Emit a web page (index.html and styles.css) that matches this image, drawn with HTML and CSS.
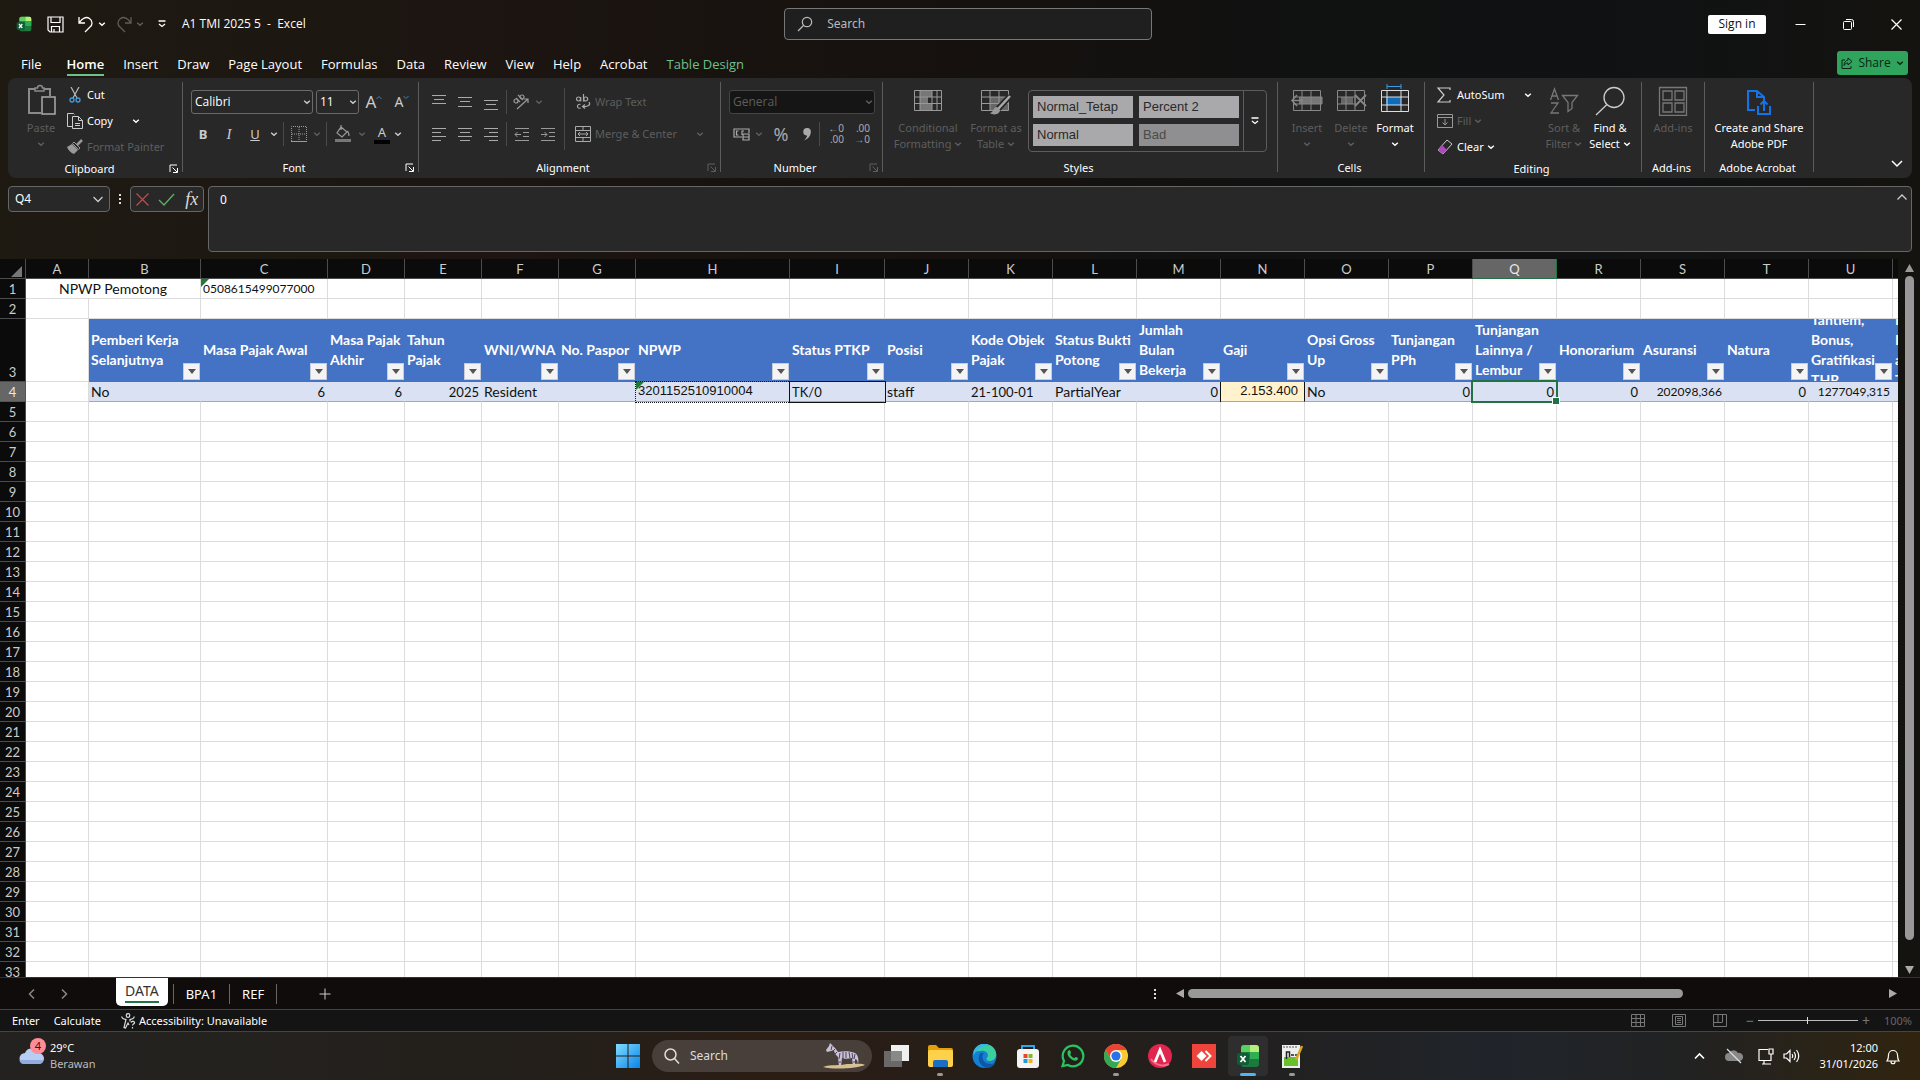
FILE: index.html
```html
<!DOCTYPE html>
<html lang="id">
<head>
<meta charset="utf-8">
<title>A1 TMI 2025 5 - Excel</title>
<link rel="stylesheet" href="styles.css">
</head>
<body>
<svg class="defs" aria-hidden="true">
  <symbol id="chev" viewBox="0 0 8 8"><path d="M1.2 2.8 4 5.2 6.8 2.8" fill="none" stroke="currentColor" stroke-width="1.5"/></symbol>
  <symbol id="launch" viewBox="0 0 10 10"><path d="M1 8V1h7M3.5 3.5 8 8M8.500 4v4.500H4" fill="none" stroke="currentColor"/></symbol>
  <symbol id="al" viewBox="0 0 16 16"><path d="M1 2.500h14M1 6.500h9M1 10.500h14M1 14.500h9" stroke="currentColor"/></symbol>
  <symbol id="ac" viewBox="0 0 16 16"><path d="M1 2.500h14M3 6.500h10M1 10.500h14M3 14.500h10" stroke="currentColor"/></symbol>
  <symbol id="ar" viewBox="0 0 16 16"><path d="M1 2.500h14M6 6.500h9M1 10.500h14M6 14.500h9" stroke="currentColor"/></symbol>
  <symbol id="vt" viewBox="0 0 16 16"><path d="M1 1.500h14M3 5.500h10M1 9.500h14" stroke="currentColor"/></symbol>
  <symbol id="vm" viewBox="0 0 16 16"><path d="M1 3.500h14M3 7.500h10M1 12.500h14" stroke="currentColor"/></symbol>
  <symbol id="vb" viewBox="0 0 16 16"><path d="M1 6.500h14M3 10.500h10M1 15.500h14" stroke="currentColor"/></symbol>
  <symbol id="xl" viewBox="0 0 24 24"><rect x="5" y="1" width="18" height="22" rx="3" fill="#1b7a3c"/><path d="M5 8V4a3 3 0 0 1 3-3h6v7z" fill="#5ad05f"/><path d="M14 1h6a3 3 0 0 1 3 3v4h-9z" fill="#b4f07a"/><path d="M14 8h9v7h-9z" fill="#2fae54"/><rect x="1" y="9" width="12" height="12" rx="2.500" fill="#0f5c36"/><path d="m4.500 12 5 6m0-6-5 6" stroke="#fff" stroke-width="1.800"/></symbol>
</svg>

<header class="titlebar">
  <svg class="i16" viewBox="0 0 24 24"><use href="#xl"/></svg>
  <button class="ib save" aria-label="Save"><svg width="17" height="17" viewBox="0 0 17 17" fill="none" stroke="currentColor" stroke-width="1.200"><path d="M1 1h15v15H3l-2-2zM4 1v5.500h9V1M4.500 16v-5.500h8V16M7 13v3"/></svg></button>
  <button class="ib" aria-label="Undo"><svg width="16" height="17" viewBox="0 0 16 17" fill="none" stroke="currentColor" stroke-width="1.300"><path d="M1 1v6h6M1.500 6.500C4 2.500 8 0 11.500 2.500s3 6.500.500 8.500l-5 5"/></svg></button>
  <svg class="cv" viewBox="0 0 8 8"><use href="#chev"/></svg>
  <button class="ib dim redo" aria-label="Redo"><svg width="16" height="17" viewBox="0 0 16 17" fill="none" stroke="currentColor" stroke-width="1.300"><path d="M15 1v6H9M14.500 6.500C12 2.500 8 0 4.500 2.500s-3 6.500-.5 8.500l5 5"/></svg></button>
  <svg class="cv dim" viewBox="0 0 8 8"><use href="#chev"/></svg>
  <button class="ib qat" aria-label="Customize"><svg width="8" height="8" viewBox="0 0 8 8" fill="none" stroke="currentColor" stroke-width="1.300"><path d="M.5 1h7M1 4l3 2.500L7 4"/></svg></button>
  <span class="doc">A1 TMI 2025 5&nbsp; -&nbsp; Excel</span>
  <label class="search"><svg width="16" height="16" viewBox="0 0 16 16" fill="none" stroke="currentColor" stroke-width="1.200"><circle cx="10" cy="6" r="4.700"/><path d="M6.500 9.500 1 15"/></svg><input type="text" placeholder="Search" aria-label="Search"></label>
  <div class="winctl">
    <button class="signin">Sign in</button>
    <button class="wb" aria-label="Minimize"><svg width="11" height="11" viewBox="0 0 11 11"><path d="M.5 5.500h10" stroke="#fff"/></svg></button>
    <button class="wb" aria-label="Restore"><svg width="11" height="11" viewBox="0 0 11 11" fill="none" stroke="#fff"><rect x=".5" y="2.500" width="8" height="8" rx="1"/><path d="M3 .5h5.500a2 2 0 0 1 2 2V8"/></svg></button>
    <button class="wb" aria-label="Close"><svg width="11" height="11" viewBox="0 0 11 11"><path d="m.5.500 10 10m0-10-10 10" stroke="#fff" stroke-width="1.200"/></svg></button>
  </div>
</header>

<nav class="tabs">
  <a href="#">File</a><a href="#" class="on">Home</a><a href="#">Insert</a><a href="#">Draw</a><a href="#">Page Layout</a><a href="#">Formulas</a><a href="#">Data</a><a href="#">Review</a><a href="#">View</a><a href="#">Help</a><a href="#">Acrobat</a><a href="#" class="ctx">Table Design</a>
  <button class="share"><svg width="12" height="12" viewBox="0 0 12 12" fill="none" stroke="currentColor"><path d="M4 3H1v8.500h9V9M7 1l4 3.500L7 8V6C5 6 4 7 3 8.500 3.200 5.500 4.500 3.500 7 3z"/></svg>Share<svg class="cv" viewBox="0 0 8 8"><use href="#chev"/></svg></button>
</nav>

<section class="ribbon">
  <div class="group g-clip">
    <div class="body">
      <button class="big w42 dim"><svg width="30" height="32" viewBox="0 0 30 32" fill="none" stroke="#8a8a8a" stroke-width="1.500"><path d="M15 29H3V5h6M18 5h6v7" stroke-width="2"/><path d="M9 7V4h2.500a2.500 2.500 0 0 1 5 0H18v3z"/><rect x="16" y="13" width="13" height="17" stroke="#aaa"/></svg><span>Paste</span><svg class="cv" viewBox="0 0 8 8"><use href="#chev"/></svg></button>
      <div class="rows">
        <button class="row"><svg class="ic" viewBox="0 0 18 16" fill="none"><path d="m5 0 6 11M13 0 7 11" stroke="#bbb" stroke-width="1.200"/><circle cx="6" cy="13" r="2" stroke="#3f9be0" stroke-width="1.300"/><circle cx="12" cy="13" r="2" stroke="#3f9be0" stroke-width="1.300"/></svg>Cut</button>
        <button class="row"><svg class="ic" viewBox="0 0 18 16" fill="none" stroke="#ccc"><path d="M6 13.500H1.500v-13h6l1 1M6.500 3.500h6l4 4v8h-10zM12.500 3.500v4h4M9 10.500h5M9 12.500h5"/></svg>Copy<svg class="cv far" viewBox="0 0 8 8"><use href="#chev"/></svg></button>
        <button class="row dim"><svg class="ic" viewBox="0 0 18 16"><path d="m16 1-5 5" stroke="#999" stroke-width="2.500"/><path d="m8 3 6 6-1.500 1.500-6-6z" fill="none" stroke="#999"/><path d="M6 5 1 8c1 3 4 6 7 7l4-4z" fill="#999"/></svg>Format Painter</button>
      </div>
    </div>
    <footer><span>Clipboard</span><svg class="la" viewBox="0 0 10 10"><use href="#launch"/></svg></footer>
  </div>
  <div class="sep"></div>

  <div class="group g-font">
    <div class="body two">
      <div class="line">
        <label class="combo w122"><select aria-label="Font"><option>Calibri</option></select><svg class="cv" viewBox="0 0 8 8"><use href="#chev"/></svg></label>
        <label class="combo w43"><select aria-label="Font size"><option>11</option></select><svg class="cv" viewBox="0 0 8 8"><use href="#chev"/></svg></label>
        <button class="t24 fs16" aria-label="Grow font">A<svg width="6" height="14" viewBox="0 0 6 14"><path d="m.5 4 2.500-2.500L5.500 4" fill="none" stroke="#3f7fb5"/></svg></button>
        <button class="t26 fs14" aria-label="Shrink font">A<svg width="6" height="14" viewBox="0 0 6 14"><path d="M.5 1 3 3.500 5.500 1" fill="none" stroke="#3f7fb5"/></svg></button>
      </div>
      <div class="line flush">
        <button class="t26"><b>B</b></button><button class="t26"><i class="ser">I</i></button><button class="t26"><u>U</u></button><svg class="cv m2" viewBox="0 0 8 8"><use href="#chev"/></svg>
        <span class="vs"></span>
        <button class="t24" aria-label="Borders"><svg width="16" height="16" viewBox="0 0 16 16" fill="none" stroke="#9a9a9a"><path d="M.5 15V.5h15V15M8 1v14M1 8h14" stroke-dasharray="1 1"/><path d="M0 15.500h16"/></svg></button><svg class="cv m2 dim" viewBox="0 0 8 8"><use href="#chev"/></svg>
        <span class="vs"></span>
        <button class="t26" aria-label="Fill colour"><svg width="16" height="18" viewBox="0 0 16 18"><path d="m6 2 6 5-5 5-5-4zM6 5V0M12 6c2 1 2 3 2 5" fill="none" stroke="#999" stroke-width="1.200"/><path d="M0 14h16v3H0z" fill="#777"/></svg></button><svg class="cv m2 dim" viewBox="0 0 8 8"><use href="#chev"/></svg>
        <button class="t24 fcol" aria-label="Font colour">A</button><svg class="cv m2" viewBox="0 0 8 8"><use href="#chev"/></svg>
      </div>
    </div>
    <footer><span>Font</span><svg class="la" viewBox="0 0 10 10"><use href="#launch"/></svg></footer>
  </div>
  <div class="sep"></div>

  <div class="group g-align">
    <div class="body">
      <div class="two w138">
        <div class="line flush">
          <button class="t26" aria-label="Top"><svg class="i16" viewBox="0 0 16 16"><use href="#vt"/></svg></button><button class="t26" aria-label="Middle"><svg class="i16" viewBox="0 0 16 16"><use href="#vm"/></svg></button><button class="t26" aria-label="Bottom"><svg class="i16" viewBox="0 0 16 16"><use href="#vb"/></svg></button>
          <span class="vs near"></span>
          <button class="t24" aria-label="Orientation"><svg class="i16" viewBox="0 0 16 16" fill="none" stroke="#999" stroke-width="1.200"><circle cx="3" cy="7" r="2"/><path d="m3 4 4 4M5 1l5 5"/><circle cx="9" cy="3" r="2"/><path d="M4 15 15 5M11 5h4v4"/></svg></button><svg class="cv m2 dim" viewBox="0 0 8 8"><use href="#chev"/></svg>
        </div>
        <div class="line flush">
          <button class="t26" aria-label="Left"><svg class="i16" viewBox="0 0 16 16"><use href="#al"/></svg></button><button class="t26" aria-label="Center"><svg class="i16" viewBox="0 0 16 16"><use href="#ac"/></svg></button><button class="t26" aria-label="Right"><svg class="i16" viewBox="0 0 16 16"><use href="#ar"/></svg></button>
          <span class="vs near"></span>
          <button class="t26" aria-label="Decrease indent"><svg class="i16" viewBox="0 0 16 16" fill="none" stroke="#999"><path d="M1 2.500h14M9 6.500h6M9 10.500h6M1 14.500h14M7 8.500H1M3.500 6 1 8.500 3.500 11"/></svg></button><button class="t26" aria-label="Increase indent"><svg class="i16" viewBox="0 0 16 16" fill="none" stroke="#999"><path d="M1 2.500h14M9 6.500h6M9 10.500h6M1 14.500h14M1 8.500h6M4.500 6 7 8.500 4.500 11"/></svg></button>
        </div>
      </div>
      <div class="vs tall"></div>
      <div class="two wrapcol">
        <button class="row r24 dim"><svg class="ic" viewBox="0 0 18 16" fill="none" stroke="#aaa" stroke-width="1.200"><circle cx="4.500" cy="5" r="2"/><path d="M6.700 3v4.500M9.500 0v7.500"/><circle cx="11.700" cy="5" r="2"/><path d="M6.500 10.500c-4-1.500-4 5 0 3.500M15 8c2 3-1 5-6 4.500m2-2-2.500 2 2.500 2"/></svg>Wrap Text</button>
        <button class="row r24 dim"><svg class="ic" viewBox="0 0 18 16" fill="none" stroke="#aaa"><path d="M1.500.5h15v15h-15zM1.500 4.500h15M1.500 11.500h15M9 .5v4M9 11.500v4M4 8h10M6 6 4 8l2 2M12 6l2 2-2 2"/></svg>Merge &amp; Center<svg class="cv far" viewBox="0 0 8 8"><use href="#chev"/></svg></button>
      </div>
    </div>
    <footer><span>Alignment</span><svg class="la dim" viewBox="0 0 10 10"><use href="#launch"/></svg></footer>
  </div>
  <div class="sep"></div>

  <div class="group g-num">
    <div class="body two">
      <div class="line"><label class="combo off w146"><select disabled aria-label="Number format"><option>General</option></select><svg class="cv" viewBox="0 0 8 8"><use href="#chev"/></svg></label></div>
      <div class="line tight">
        <button class="t24" aria-label="Accounting"><svg width="17" height="16" viewBox="0 0 17 16" fill="none" stroke="#aaa" stroke-width="1.200"><path d="M9 11H1V3h15v4M5.500 5h-2v4h2M9 9V5h2"/><path d="M10 8h6v6h-6zM10 11h6" /></svg></button><svg class="cv m2 dim" viewBox="0 0 8 8"><use href="#chev"/></svg>
        <button class="t32 pct">%</button>
        <button class="t20" aria-label="Comma"><svg width="8" height="13" viewBox="0 0 8 13"><path d="M4 0a3.500 3.500 0 0 1 3.800 4C7.800 8 5 11 1 12.500c2-2 3-3.500 3-5A3.500 3.500 0 0 1 4 0z" fill="#aaa"/></svg></button>
        <span class="vs near"></span>
        <button class="t26 dec">←0<br>.00</button><button class="t26 dec">.00<br>→0</button>
      </div>
    </div>
    <footer><span>Number</span><svg class="la dim" viewBox="0 0 10 10"><use href="#launch"/></svg></footer>
  </div>
  <div class="sep"></div>

  <div class="group g-sty">
    <div class="body">
      <button class="big w84 dim"><svg width="30" height="32" viewBox="0 0 30 32"><path d="M7 6h12v20H7z" fill="#777"/><path d="M15 13h8v6h-8z" fill="#282828"/><path d="M1.500 6.500h27v20h-27zM1.500 13h27M1.500 19.500h27M7 6v20M19 6v20M24 6v20" fill="none" stroke="#999"/></svg><span>Conditional<br>Formatting <svg class="cv" viewBox="0 0 8 8"><use href="#chev"/></svg></span></button>
      <button class="big w52 dim"><svg width="32" height="32" viewBox="0 0 32 32"><path d="M10 13h18v13H10z" fill="#666"/><path d="M1.500 6.500h27v20h-27zM1.500 13h27M1.500 19.500h27M10 6v20M19 6v20" fill="none" stroke="#999"/><path d="M30 12 18 25" stroke="#282828" stroke-width="6"/><path d="M30 12 18 25" stroke="#aaa" stroke-width="2.500"/><path d="M17 23c-4 0-3 5-7 6 4 3 10 1 10-3z" fill="#999"/></svg><span>Format as<br>Table <svg class="cv" viewBox="0 0 8 8"><use href="#chev"/></svg></span></button>
      <div class="gallery"><div class="swatches"><button>Normal_Tetap</button><button>Percent 2</button><button>Normal</button><button class="bad">Bad</button></div><button class="more" aria-label="More"><svg width="8" height="8" viewBox="0 0 8 8" fill="none" stroke="#fff" stroke-width="1.300"><path d="M.5 1h7M1 4l3 2.500L7 4"/></svg></button></div>
    </div>
    <footer><span>Styles</span></footer>
  </div>
  <div class="sep"></div>

  <div class="group g-cells">
    <div class="body">
      <button class="big w44 dim"><svg width="32" height="32" viewBox="0 0 32 32"><path d="M8 13h23v7H8z" fill="#777"/><path d="M2.500 6.500h27v20h-27zM11 6v20M20 6v20M2 13h29v7H2" fill="none" stroke="#888"/><path d="M12 16.500H1M6 11l-5 5.500L6 22" fill="none" stroke="#888" stroke-width="1.500"/></svg><span>Insert</span><svg class="cv" viewBox="0 0 8 8"><use href="#chev"/></svg></button>
      <button class="big w44 dim"><svg width="32" height="32" viewBox="0 0 32 32"><path d="M6 13h12v7H6z" fill="#666"/><path d="M2.500 6.500h27v20h-27zM11 6v20M20 6v20M2 13h18v7H2" fill="none" stroke="#888"/><path d="m20 11 11 11m0-11L20 22" fill="none" stroke="#888" stroke-width="1.800"/></svg><span>Delete</span><svg class="cv" viewBox="0 0 8 8"><use href="#chev"/></svg></button>
      <button class="big w44"><svg width="32" height="32" viewBox="0 0 32 32"><path d="M7 13h15v8H7z" fill="#0f6cbd"/><path d="M2.500 6.500h27v21h-27zM2 13h27M2 21h27M8 7v20M22 7v20" fill="none" stroke="#ddd"/><path d="M8 2.500h14M8 0v5M22 0v5" stroke="#3f9be0"/></svg><span>Format</span><svg class="cv" viewBox="0 0 8 8"><use href="#chev"/></svg></button>
    </div>
    <footer><span>Cells</span></footer>
  </div>
  <div class="sep"></div>

  <div class="group g-edit">
    <div class="body">
      <div class="rows w106">
        <button class="row"><svg class="ic" viewBox="0 0 18 16"><path d="M14 3V1H2l6 7-6 7h12v-2" fill="none" stroke="#ccc" stroke-width="1.200"/></svg>AutoSum<svg class="cv far2" viewBox="0 0 8 8"><use href="#chev"/></svg></button>
        <button class="row dim"><svg class="ic" viewBox="0 0 18 16" fill="none" stroke="#999"><path d="M1.500 1.500h15v13h-15zM1.500 4.500h15M9 6v6M6.500 9.500 9 12l2.500-2.500"/></svg>Fill <svg class="cv" viewBox="0 0 8 8"><use href="#chev"/></svg></button>
        <button class="row"><svg class="ic" viewBox="0 0 18 16"><path d="m11 1 5 4-9 10-5-4z" fill="none" stroke="#ccc"/><path d="m6 6 5 5-4 4-5-4z" fill="#b146c2"/></svg>Clear <svg class="cv" viewBox="0 0 8 8"><use href="#chev"/></svg></button>
      </div>
      <button class="big w46 dim"><svg width="30" height="32" viewBox="0 0 30 32" fill="none" stroke="#777" stroke-width="1.300"><path d="m1.500 16 4-11 4 11M3 12h5M2 19h7L2 29h8M13.500 11.500h15l-5.500 7v6l-4 3v-9z"/></svg><span>Sort &amp;<br>Filter <svg class="cv" viewBox="0 0 8 8"><use href="#chev"/></svg></span></button>
      <button class="big w46"><svg width="30" height="32" viewBox="0 0 30 32" fill="none" stroke="#ccc" stroke-width="1.300"><circle cx="19" cy="13.500" r="10"/><path d="M12 20.500 1 31"/></svg><span>Find &amp;<br>Select <svg class="cv" viewBox="0 0 8 8"><use href="#chev"/></svg></span></button>
    </div>
    <footer><span>Editing</span></footer>
  </div>
  <div class="sep"></div>

  <div class="group g-add">
    <div class="body mid">
      <button class="big dim"><svg width="30" height="32" viewBox="0 0 30 32" fill="none" stroke="#777" stroke-width="1.300"><path d="M1.500 3.500h27v28h-27zM5 7h9v9H5zM17 7h9v9h-9zM5 19h9v9H5zM17 19h9v9h-9z"/></svg><span>Add-ins</span></button>
    </div>
    <footer><span>Add-ins</span></footer>
  </div>
  <div class="sep"></div>

  <div class="group g-acro">
    <div class="body mid">
      <button class="big"><svg width="26" height="32" viewBox="0 0 26 32" fill="none" stroke="#1473e6" stroke-width="2"><path d="M9 26H2V7h9l7 6v4M11 7v6h7M12 22v8h12v-8M18 27v-9M14.500 20.500 18 17l3.500 3.500"/></svg><span>Create and Share<br>Adobe PDF</span></button>
    </div>
    <footer><span>Adobe Acrobat</span></footer>
  </div>
  <div class="sep"></div>
  <button class="collapse" aria-label="Collapse ribbon"><svg width="12" height="8" viewBox="0 0 12 8"><path d="m1 1 5 5 5-5" fill="none" stroke="#fff" stroke-width="1.500"/></svg></button>
</section>

<section class="formula">
  <label class="namebox"><input type="text" value="Q4" aria-label="Name box"><svg width="10" height="7" viewBox="0 0 10 7"><path d="m.5 1 4.500 4.500L9.500 1" fill="none" stroke="#ccc" stroke-width="1.300"/></svg></label>
  <span class="dots"></span>
  <div class="fx"><button aria-label="Cancel"><svg width="13" height="13" viewBox="0 0 13 13"><path d="m.5.500 12 12m0-12-12 12" stroke="#c24b4b" stroke-width="1.200"/></svg></button><button aria-label="Enter"><svg width="17" height="13" viewBox="0 0 17 13"><path d="m1 7 5 5L16 1" fill="none" stroke="#5fb05f" stroke-width="1.300"/></svg></button><button class="ser">fx</button></div>
  <div class="fbox"><textarea aria-label="Formula">0</textarea><svg width="10" height="7" viewBox="0 0 10 7"><path d="m.5 5.500 4.500-4.500 4.500 4.500" fill="none" stroke="#ccc" stroke-width="1.300"/></svg></div>
</section>

<main class="sheet">
  <div class="viewport">
    <table class="grid">
      <colgroup><col class="c26"><col class="c62"><col class="c112"><col class="c127"><col class="c77"><col class="c77"><col class="c77"><col class="c77"><col class="c154"><col class="c95"><col class="c84" span="13"></colgroup>
      <thead><tr><th class="corner"><svg width="11" height="11" viewBox="0 0 11 11"><path d="M11 0v11H0z" fill="#777"/></svg></th><th>A</th><th>B</th><th>C</th><th>D</th><th>E</th><th>F</th><th>G</th><th>H</th><th>I</th><th>J</th><th>K</th><th>L</th><th>M</th><th>N</th><th>O</th><th>P</th><th class="sel">Q</th><th>R</th><th>S</th><th>T</th><th>U</th><th></th></tr></thead>
      <tbody id="rows">
        <tr><th>1</th><td colspan="2" class="mid-t">NPWP Pemotong</td><td class="err num-t">0508615499077000</td><td></td><td></td><td></td><td></td><td></td><td></td><td></td><td></td><td></td><td></td><td></td><td></td><td></td><td></td><td></td><td></td><td></td><td></td><td></td></tr>
        <tr><th>2</th><td></td><td></td><td></td><td></td><td></td><td></td><td></td><td></td><td></td><td></td><td></td><td></td><td></td><td></td><td></td><td></td><td></td><td></td><td></td><td></td><td></td><td></td></tr>
        <tr class="head"><th>3</th><td></td><td><div>Pemberi Kerja<br>Selanjutnya</div></td><td><div>Masa Pajak Awal</div></td><td><div>Masa Pajak<br>Akhir</div></td><td><div>Tahun<br>Pajak</div></td><td><div>WNI/WNA</div></td><td><div>No. Paspor</div></td><td><div>NPWP</div></td><td><div>Status PTKP</div></td><td><div>Posisi</div></td><td><div>Kode Objek<br>Pajak</div></td><td><div>Status Bukti<br>Potong</div></td><td><div>Jumlah<br>Bulan<br>Bekerja</div></td><td><div>Gaji</div></td><td><div>Opsi Gross<br>Up</div></td><td><div>Tunjangan<br>PPh</div></td><td><div>Tunjangan<br>Lainnya /<br>Lembur</div></td><td><div>Honorarium</div></td><td><div>Asuransi</div></td><td><div>Natura</div></td><td><div>Tantiem,<br>Bonus,<br>Gratifikasi,<br>THR</div></td><td><div>Iuran<br>Pensiun<br>atau<br>THT</div></td></tr>
        <tr class="data"><th class="sel">4</th><td></td><td>No</td><td class="r n">6</td><td class="r n">6</td><td class="r n">2025</td><td>Resident</td><td></td><td class="err ants arial">3201152510910004</td><td class="boxed n">TK/0</td><td>staff</td><td class="n">21-100-01</td><td>PartialYear</td><td class="r n">0</td><td class="r arial gaji">2.153.400</td><td>No</td><td class="r n">0</td><td class="r n active">0</td><td class="r n">0</td><td class="r num-t">202098,366</td><td class="r n">0</td><td class="r num-t">1277049,315</td><td></td></tr>
      </tbody>
    </table>
  </div>
  <div class="vscroll"><svg width="9" height="8" viewBox="0 0 9 8"><path d="M4.500 0 9 8H0z" fill="#999"/></svg><span class="thumb"></span><svg class="dn" width="9" height="8" viewBox="0 0 9 8"><path d="M4.500 8 9 0H0z" fill="#aaa"/></svg></div>
</main>

<div class="sheetbar">
  <button class="nav" aria-label="Previous sheets"><svg width="7" height="10" viewBox="0 0 7 10"><path d="M6 .5 1.500 5 6 9.500" fill="none" stroke="#888" stroke-width="1.500"/></svg></button>
  <button class="nav" aria-label="Next sheets"><svg width="7" height="10" viewBox="0 0 7 10"><path d="M1 .5 5.500 5 1 9.500" fill="none" stroke="#888" stroke-width="1.500"/></svg></button>
  <button class="tab on"><span>DATA</span></button><button class="tab first">BPA1</button><button class="tab">REF</button>
  <button class="plus" aria-label="New sheet"><svg width="12" height="12" viewBox="0 0 12 12"><path d="M6 .5v11M.5 6h11" stroke="#ccc"/></svg></button>
  <span class="dots"></span>
  <div class="hscroll"><svg width="8" height="9" viewBox="0 0 8 9"><path d="M0 4.500 8 0v9z" fill="#aaa"/></svg><div class="track"><span class="thumb"></span></div><svg width="8" height="9" viewBox="0 0 8 9"><path d="M8 4.500 0 0v9z" fill="#aaa"/></svg></div>
</div>

<footer class="status">
  <span>Enter</span><span>Calculate</span>
  <span class="acc"><svg width="15" height="16" viewBox="0 0 15 16" fill="none" stroke="#ddd" stroke-width="1.200"><circle cx="7" cy="2.500" r="1.800"/><path d="M1 3.500c-.5 2 2 2.500 4 3l-2 8 1.500.5L7 10l1 2M13 3.500c.5 2-2 2.500-4 3v2M10 9.500c1-2 4-1 3.500.5-.5 1.200-2 1-2 2.500M11.500 14v1.500"/></svg>Accessibility: Unavailable</span>
  <div class="views">
    <svg width="14" height="13" viewBox="0 0 14 13" fill="none" stroke="#777"><path d="M.5.500h13v12H.5zM.5 4.500h13M.5 8.500h13M5 .5v12M9.500.500v12"/></svg>
    <svg width="14" height="13" viewBox="0 0 14 13" fill="none" stroke="#777"><path d="M.5.500h13v12H.5zM3.500 2.500h7v8h-7zM5 4.500h4M5 6.500h4M5 8.500h4"/></svg>
    <svg width="14" height="13" viewBox="0 0 14 13" fill="none" stroke="#777"><path d="M.5.500h13v12H.5zM5 0v8M9.500 0v8M.5 8.500h9"/></svg>
  </div>
  <div class="zoom"><span>−</span><input type="range" min="0" max="100" value="50" aria-label="Zoom"><span>+</span></div>
  <span class="pc">100%</span>
</footer>

<div class="taskbar">
  <div class="weather"><div class="wicon"><svg width="26" height="22" viewBox="0 0 26 22"><path d="M6 20a5.500 5.500 0 0 1 0-11 7 7 0 0 1 13 0 5.500 5.500 0 0 1 1 11z" fill="#b8cdf2"/><path d="M5 20c-3 0-4-1.500-4.500-4h24C24 19 22 20 20 20z" fill="#8fabe2"/></svg><span class="badge">4</span></div><div><div>29°C</div><div class="sub">Berawan</div></div></div>
  <div class="apps">
    <button class="start" aria-label="Start"><svg width="24" height="24" viewBox="0 0 24 24"><defs><linearGradient id="w" x2="1" y2="1"><stop stop-color="#7fdcff"/><stop offset="1" stop-color="#0a84e8"/></linearGradient></defs><path d="M0 0h11.500v11.500H0zM12.500 0H24v11.500H12.500zM0 12.500h11.500V24H0zM12.500 12.500H24V24H12.500z" fill="url(#w)"/></svg></button>
    <label class="tsearch"><svg width="16" height="16" viewBox="0 0 16 16" fill="none" stroke="#ddd" stroke-width="1.500"><circle cx="6.500" cy="6.500" r="5.500"/><path d="m10.500 10.500 4.500 5"/></svg><input type="text" placeholder="Search" aria-label="Search Windows"><svg width="44" height="28" viewBox="0 0 44 28"><path d="M1 25c8-3 16-1 24-3 8 0 16-1 18 1-6 3-30 5-42 2z" fill="#d8bf8c"/><path d="M8 1l2 2 3 3 3 4c6-1 12-1 17 1 3 2 4 6 3 11l-1-4-2-1v7h-2l-1-8c-4 1-8 1-10 0l-1 8h-2l-1-9c-2-2-4-4-4-7l-3 1-4 1-1-2 3-4z" fill="#c9c2d6"/><path d="m10 4-1 4M13 7l-2 2M15 10l-3 3M18 11l-1 6M21 10v7M24 10v6M27 10l1 6M30 11l1 6M33 12l-1 5M17 20h2M31 20h2" stroke="#4a4158"/></svg></label>
    <button class="app" aria-label="Task view"><svg width="25" height="24" viewBox="0 0 25 24"><rect x="7" y="1" width="18" height="16" fill="#f0f0f0"/><rect x="0" y="7" width="18" height="16" fill="#777" opacity=".85"/></svg></button>
    <button class="app run" aria-label="File Explorer"><svg width="25" height="24" viewBox="0 0 25 24"><path d="M0 3a2 2 0 0 1 2-2h6l3 3h12a2 2 0 0 1 2 2v4H0z" fill="#e3a008"/><rect y="6" width="25" height="17" rx="2" fill="#ffd04a"/><path d="M5 18a2 2 0 0 1 2-2h11a2 2 0 0 1 2 2v5H5z" fill="#1a6fc4"/></svg></button>
    <button class="app" aria-label="Edge"><svg width="25" height="24" viewBox="0 0 24 24"><circle cx="12" cy="12" r="12" fill="#1380d2"/><path d="M1 8C4-1 16-3 22 5c4 7 0 12-5 12-3 0-4-2-2-4 2-4-3-7-7-6-4 0-6 1-7 1z" fill="#3bcfa0"/><path d="M1 8C4-1 13-2 18 2 12 1 5 3 1 12z" fill="#35b8e8"/><path d="M8 9c-4 5-1 13 6 15 4 0 7-2 9-5-5 2-12 1-13-5-.5-3 0-4 2-5z" fill="#0f55a8"/></svg></button>
    <button class="app" aria-label="Store"><svg width="24" height="24" viewBox="0 0 24 24"><path d="M6 6V2h12v4" fill="none" stroke="#2ba7e8" stroke-width="2"/><rect x="1" y="5" width="22" height="19" rx="3" fill="#f4f4f4"/><path d="M7.500 10h4v4h-4z" fill="#e8452c"/><path d="M12.500 10h4v4h-4z" fill="#7db928"/><path d="M7.500 15h4v4h-4z" fill="#1f9ae0"/><path d="M12.500 15h4v4h-4z" fill="#f6b21b"/></svg></button>
    <button class="app" aria-label="WhatsApp"><svg width="25" height="24" viewBox="0 0 24 24"><path d="M2 22 3.500 17A10.300 10.300 0 1 1 7.500 21z" fill="none" stroke="#27c45f" stroke-width="2.200"/><path d="M8 6.500c1-1 2 0 2.500 2 .2 1-1 1.300-.7 2 .8 1.700 2 2.800 3.700 3.500.8.200 1-1.200 2-1 2 .8 2.500 1.300 1.700 2.500-3 4-12-3-10-8z" fill="#27c45f"/></svg></button>
    <button class="app run" aria-label="Chrome"><svg width="24" height="24" viewBox="0 0 24 24"><circle cx="12" cy="12" r="12" fill="#fcc934"/><path d="M1.600 6A12 12 0 0 1 22.400 6H12L6.800 15z" fill="#ea4335"/><path d="M1.600 6A12 12 0 0 0 12 24l5.200-9L6.800 15z" fill="#34a853"/><circle cx="12" cy="12" r="6" fill="#fff"/><circle cx="12" cy="12" r="4.600" fill="#2a72e8"/></svg></button>
    <button class="app" aria-label="Adobe"><svg width="24" height="24" viewBox="0 0 24 24"><circle cx="12" cy="12" r="12" fill="#e0264e"/><path d="M3 15c4 6 12 8 18 5" stroke="#f2708a" stroke-width="2" fill="none"/><path d="m7 18 5-12 5 12" fill="none" stroke="#fff" stroke-width="2.800"/></svg></button>
    <button class="app" aria-label="AnyDesk"><svg width="24" height="24" viewBox="0 0 24 24"><path d="M0 0h24v24H0z" fill="#ef443b"/><path d="m9.500 7 5 5-5 5-5-5z" fill="#fff"/><path d="m13.500 7 5 5-5 5" fill="none" stroke="#fff" stroke-width="2"/></svg></button>
    <button class="app cur" aria-label="Excel"><svg width="24" height="24" viewBox="0 0 24 24"><use href="#xl"/></svg></button>
    <button class="app run" aria-label="Notepad++"><svg width="24" height="24" viewBox="0 0 24 24"><path d="M2 1h18v23H2z" fill="#eee"/><path d="M4 13h14v9H4z" fill="#67c22a"/><path d="M4 2v2m3-2v2m3-2v2m3-2v2m3-2v2" stroke="#555"/><path d="M6.500 15V8h3v5M11 11h3M15 11h3" stroke="#222" stroke-width="1.500" fill="none"/><path d="m22 2-6 14" stroke="#d9a520" stroke-width="2.500"/></svg></button>
  </div>
  <div class="tray">
    <svg width="11" height="8" viewBox="0 0 11 8"><path d="m1 6.500 4.500-4.500L10 6.500" fill="none" stroke="#fff" stroke-width="1.600"/></svg>
    <svg class="cloud" width="18" height="16" viewBox="0 0 18 16"><path d="M4 13a4 4 0 0 1 0-8 5 5 0 0 1 9 0 4 4 0 0 1 2 8z" fill="#888"/><path d="m2 1 14 14" stroke="#ddd" stroke-width="1.200"/></svg>
    <svg class="mon" width="17" height="17" viewBox="0 0 17 17" fill="none" stroke="#fff" stroke-width="1.200"><path d="M10 1.500H1v11h12V9M4 16h9M6 12.500V16M11 1h4v5h-4zM13 6v6"/></svg>
    <svg width="17" height="14" viewBox="0 0 17 14" fill="none" stroke="#fff" stroke-width="1.200"><path d="M1 5h2.500L7 1.500v11L3.500 9H1zM9 5q1.500 2 0 4M11 3q3 4 0 8M13.500 1q4.500 6 0 12"/></svg>
    <div class="clock"><div>12:00</div><div>31/01/2026</div></div>
    <svg width="14" height="17" viewBox="0 0 14 17" fill="none" stroke="#fff" stroke-width="1.200"><path d="M1 13c1.500-2 1.500-3 1.500-6a4.500 4.500 0 0 1 9 0c0 3 0 4 1.500 6zM5 13.500c0 3 4 3 4 0"/></svg>
  </div>
</div>
<script src="script.js"></script>
</body>
</html>
```
FILE: styles.css
```css
* { box-sizing: border-box; }
html, body { height: 100%; }
body {
  margin: 0;
  display: flex;
  flex-direction: column;
  overflow: hidden;
  font: 11px/16px "Noto Sans", "Open Sans", sans-serif;
  color: #fff;
  background: linear-gradient(90deg, #1e1a12, #1c1511 25%, #16110f 50%, #111 65%, #101213 88%, #14130f);
}
button, input, select, textarea { font: inherit; color: inherit; background: none; border: 0; padding: 0; margin: 0; outline: 0; resize: none; }
button { display: flex; align-items: center; justify-content: center; white-space: nowrap; }
a { color: inherit; text-decoration: none; }
svg { flex: none; }
.defs { display: none; }
.dim { color: #5e5e5e; }
.i16 { width: 16px; height: 16px; }
.cv { width: 8px; height: 8px; }
.ser { font-family: "Liberation Serif", serif; font-style: italic; font-size: 15px; }

/* title bar */
.titlebar { display: flex; align-items: center; height: 48px; padding-left: 16px; position: relative; font: 12px/16px "Open Sans", sans-serif; flex: none; }
.ib { height: 24px; }
.save { margin: 0 14px 0 15px; }
.titlebar > .cv { margin-left: 4px; }
.redo { margin-left: 10px; }
.qat { margin: 0 16px 0 14px; }
.doc { flex: 1; }
.search { position: absolute; left: 41%; margin-left: -3px; top: 8px; display: flex; align-items: center; gap: 14px; width: 368px; height: 32px; padding-left: 12px; border: 1px solid #777; border-radius: 4px; background: #1f1f1f; color: #bbb; font-family: "Noto Sans", sans-serif; }
.search input { flex: 1; min-width: 0; }
input::placeholder { color: inherit; opacity: 1; }
.winctl { display: flex; align-items: center; }
.signin { background: #fff; color: #111; width: 58px; height: 19px; border-radius: 2px; margin-right: 10px; }
.wb { width: 48px; height: 32px; }

/* ribbon tabs */
.tabs { display: flex; align-items: center; height: 30px; padding: 0 12px 0 21px; font: 13px/20px "Open Sans", sans-serif; flex: none; gap: 19px; }
.tabs a { padding-top: 4px; border-bottom: 2px solid transparent; }
.tabs a:first-child { margin-right: 6px; }
.tabs .on { font-weight: 600; border-color: #6cc08b; }
.tabs .ctx { color: #6cc08b; }
.share { margin-left: auto; width: 71px; height: 24px; border-radius: 3px; background: #2fa45c; color: #0c2415; font-size: 12px; gap: 5px; }

/* ribbon */
.ribbon { display: flex; margin: 0 8px; height: 100px; flex: none; border-radius: 8px; background: #282828; position: relative; }
.group { display: flex; flex-direction: column; flex: none; }
.group .body { display: flex; flex: 1; }
.group footer { display: flex; align-items: center; height: 20px; padding-right: 3px; }
.group footer span { flex: 1; text-align: center; }
.la { width: 10px; height: 10px; }
.sep { width: 1px; margin: 4px 0 6px; background: #5c5c5c; flex: none; }
.g-clip { width: 174px; padding-left: 12px; }
.g-clip footer { margin-left: -10px; }
.g-font { width: 235px; }
.g-align { width: 301px; }
.g-num { width: 161px; }
.g-sty { width: 394px; }
.g-cells { width: 146px; }
.g-edit { width: 216px; }
.g-add { width: 62px; }
.g-acro { width: 108px; }
.body.mid { justify-content: center; }
.big { flex-direction: column; justify-content: flex-start; padding-top: 6px; line-height: 16px; flex: none; }
.big > span { margin-top: 4px; }
.big > .cv { margin-top: 4px; }
.w42 { width: 42px; } .w44 { width: 44px; } .w46 { width: 46px; } .w52 { width: 52px; } .w84 { width: 84px; }
.g-sty .body { padding-left: 3px; }
.g-cells .body { padding-left: 7px; }
.g-edit .body { padding-left: 10px; }
.rows { padding: 4px 0 0 4px; }
.w106 { width: 106px; padding-left: 1px; }
.row { height: 26px; gap: 3px; }
.r24 { height: 24px; }
.ic { width: 18px; height: 16px; }
.far { margin-left: 16px; }
.far2 { margin-left: 16px; }
.two { display: flex; flex-direction: column; gap: 8px; padding-top: 12px; }
.body.two { flex-direction: column; }
.line { display: flex; align-items: center; height: 24px; padding-left: 8px; gap: 3px; color: #ccc; }
.line.flush { gap: 0; padding-left: 7px; }
.line.tight { gap: 0; }
.g-align .line { color: #aaa; }
.t20 { width: 20px; } .t24 { width: 24px; } .t26 { width: 26px; } .t32 { width: 32px; }
.line button { height: 24px; font-size: 13px; }
.line .fs16 { font-size: 17px; } .line .fs14 { font-size: 14px; }
.line .pct { font-size: 18px; color: #aaa; }
.line .dec { display: block; font-size: 10px; line-height: 11px; color: #aaa; text-align: right; padding-right: 4px; }
.line .ser { font-size: 15px; }
.line .fcol { border-bottom: 4px solid #000; margin: 0 2px 0 6px; width: 16px; height: 20px; line-height: 16px; }
.m2 { margin: 0 2px; }
.vs { width: 1px; height: 24px; margin: 0 3px; background: #4a4a4a; }
.vs.near { margin: 0 2px; }
.vs.tall { height: 62px; margin: 10px 0 0; }
.w138 { width: 145px; }
.wrapcol { padding-left: 9px; align-items: flex-start; }
.combo { position: relative; height: 24px; }
.combo select { appearance: none; width: 100%; height: 24px; border: 1px solid #6a6a6a; border-radius: 3px; padding-left: 3px; font: 12px/18px "Open Sans", sans-serif; color: #fff; background: #282828; opacity: 1; }
.combo .cv { position: absolute; right: 2px; top: 8px; }
.combo.off select { background: #151515; color: #5e5e5e; border-color: #444; }
.combo.off .cv { color: #5e5e5e; }
.w122 { width: 122px; } .w43 { width: 43px; } .w146 { width: 146px; }
.gallery { display: flex; width: 239px; height: 62px; margin: 12px 0 0 6px; border: 1px solid #5c5c5c; border-radius: 4px; }
.swatches { display: grid; grid-template-columns: 100px 100px; gap: 6px; padding: 5px 4px; width: 215px; border-right: 1px solid #5c5c5c; }
.swatches button { justify-content: flex-start; padding-left: 4px; height: 22px; background: #a9a9ab; color: #2a2a2a; font: 13px/20px "Liberation Sans", Arial, sans-serif; }
.swatches .bad { background: #8f8f91; color: #4a4a4a; }
.more { flex: 1; }
.collapse { position: absolute; right: 9px; bottom: 10px; }

/* formula bar */
.formula { display: flex; align-items: flex-start; padding: 8px 8px 7px; height: 81px; flex: none; font-size: 12px; }
.namebox { display: flex; align-items: center; width: 102px; height: 26px; padding: 0 6px; border: 1px solid #666; border-radius: 4px; background: #282828; }
.namebox input { flex: 1; min-width: 0; }
.dots { width: 2px; height: 10px; background: repeating-linear-gradient(#ddd 0 2px, transparent 2px 4px); margin: 8px 9px; flex: none; }
.fx { display: flex; align-items: center; justify-content: space-around; width: 74px; height: 26px; border: 1px solid #666; border-radius: 4px; background: #282828; }
.fx .ser { font-size: 18px; color: #ddd; }
.fbox { flex: 1; display: flex; align-items: flex-start; margin-left: 4px; height: 66px; padding: 4px 4px 0 11px; border: 1px solid #666; border-radius: 4px; background: #282828; }
.fbox textarea { flex: 1; height: 56px; line-height: 17px; }
.fbox svg { margin-top: 3px; }

/* sheet */
.sheet { flex: 1; display: flex; min-height: 0; }
.viewport { flex: 1; min-width: 0; overflow: hidden; background: #fff; color: #111; }
.grid { table-layout: fixed; width: 1976px; border-spacing: 0; font: 14px/18px Lato, "Open Sans", sans-serif; }
.c26 { width: 26px; } .c62 { width: 63px; } .c112 { width: 112px; } .c127 { width: 127px; } .c77 { width: 77px; } .c154 { width: 154px; } .c95 { width: 95px; } .c84 { width: 84px; }
.grid th { background: #0b0b0b; color: #ccc; font-weight: 400; font-size: 13px; line-height: 18px; padding: 0; height: 20px; border-right: 1px solid #4c4c4c; border-bottom: 1px solid #4c4c4c; vertical-align: bottom; }
.grid th.sel { background: #666; border-color: #217346; color: #e8e8e8; }
.grid .corner { text-align: right; padding-right: 3px; line-height: 12px; }
.grid td { height: 20px; padding: 1px 2px 0; border-right: 1px solid #dcdcdc; border-bottom: 1px solid #dcdcdc; white-space: nowrap; position: relative; }
.grid .r { text-align: right; }
.grid .n { font-size: 13px; }
.grid .num-t { font-size: 12px; }
.grid .mid-t { text-align: center; }
.grid .head td { height: 63px; padding: 0; }
.head td:nth-child(n+3) { background: #4472c4; color: #fff; font-weight: 700; border-color: #4472c4; }
.head td > div { height: 62px; overflow: hidden; display: flex; flex-direction: column; justify-content: center; padding-left: 2px; line-height: 20px; }
.filter { position: absolute; right: 0; bottom: 1px; width: 17px; height: 17px; background: #f4f4f4; border: 1px solid #c8ccd4; }
.data td:nth-child(n+3) { background: #d9e1f2; border-right-color: #d9e1f2; border-bottom-color: #8ea9db; }
.err::before { content: ""; position: absolute; left: 0; top: 0; border: 4px solid; border-color: #1e7a34 transparent transparent #1e7a34; }
.grid .arial { font-family: "Liberation Sans", Arial, sans-serif; font-size: 13px; line-height: 16px; vertical-align: top; }
.data td.ants { outline: 1px dotted #111; z-index: 1; }
.data td.boxed { outline: 1px solid #111; z-index: 1; }
.data td.gaji { background: #fff2cc; border-right-color: #111; box-shadow: -1px 0 #111; padding-right: 6px; z-index: 1; }
.data td.active { z-index: 2; }
.active::after { content: ""; position: absolute; inset: -2px; border: 2px solid #217346; }
.active::before { content: ""; position: absolute; right: -4px; bottom: -4px; width: 6px; height: 6px; background: #217346; border: 1px solid #fff; z-index: 1; }
.vscroll { width: 22px; flex: none; display: flex; flex-direction: column; align-items: center; padding: 5px 0 3px; gap: 4px; }
.vscroll .thumb { width: 9px; flex: 1; margin-bottom: 22px; border-radius: 5px; background: #999; }

/* sheet tabs */
.sheetbar { display: flex; align-items: center; height: 32px; flex: none; background: #0f0c0b; border-top: 1px solid #333; font-size: 13px; }
.nav { width: 33px; }
.nav:first-child { margin-left: 15px; }
.tab { height: 20px; padding: 0 12px; border-right: 1px solid #666; }
.tab.first { border-left: 1px solid #666; }
.tab.on { height: 28px; align-self: flex-start; background: #fff; color: #333; padding: 0 9px; border: 0; border-radius: 0 0 5px 5px; margin: 0 5px 0 35px; font-size: 14px; }
.tab.on span { border-bottom: 2px solid #217346; line-height: 20px; }
.plus { margin: 0 auto 0 42px; }
.sheetbar .dots { margin: 0 20px 0 0; }
.hscroll { display: flex; align-items: center; gap: 4px; width: 721px; margin-right: 23px; }
.track { flex: 1; }
.track .thumb { display: block; width: 71%; height: 9px; border-radius: 5px; background: #999; }

/* status bar */
.status { display: flex; align-items: center; height: 23px; flex: none; padding: 0 8px 0 12px; background: #141414; border-top: 1px solid #444; border-bottom: 1px solid #444; gap: 14px; }
.acc { display: flex; align-items: center; gap: 3px; margin: 0 auto 0 6px; }
.views { display: flex; gap: 27px; margin-right: 5px; }
.zoom { display: flex; align-items: center; gap: 4px; color: #777; font-size: 14px; }
.zoom input { appearance: none; width: 100px; height: 1px; background: #bbb; }
.zoom input::-webkit-slider-thumb { appearance: none; width: 1px; height: 7px; background: #ddd; }
.pc { color: #666; }

/* taskbar */
.taskbar { display: flex; align-items: center; justify-content: space-between; height: 48px; flex: none; background: linear-gradient(90deg, #242220, #23201c 25%, #2a1d14 40%, #231f1c 60%, #20242a 78%, #222 88%, #30240f); }
.weather { display: flex; align-items: center; gap: 5px; padding-left: 19px; width: 612px; }
.wicon { position: relative; height: 24px; }
.badge { position: absolute; left: 11px; top: -6px; width: 16px; height: 16px; border-radius: 8px; background: #ff8c96; color: #222; text-align: center; }
.sub { color: #bbb; }
.apps { display: flex; align-items: center; height: 48px; }
.start { margin-right: 12px; }
.tsearch { display: flex; align-items: center; gap: 10px; width: 220px; height: 32px; border-radius: 16px; background: #483f3a; padding: 0 6px 0 12px; font-size: 12px; color: #ddd; }
.tsearch input { flex: 1; min-width: 0; }
.app { width: 40px; height: 40px; margin-right: 4px; position: relative; border-radius: 4px; }
.tsearch + .app { margin-left: 4px; }
.run::after, .cur::after { content: ""; position: absolute; bottom: 0; left: 17px; width: 6px; height: 3px; border-radius: 2px; background: #999; }
.cur { background: #2e2e2e; }
.cur::after { left: 12px; width: 16px; background: #4cb8f0; }
.tray { display: flex; align-items: center; justify-content: flex-end; width: 600px; padding-right: 20px; }
.cloud { margin: 0 15px 0 20px; }
.mon { margin-right: 8px; }
.clock { text-align: right; width: 78px; margin-right: 8px; }
```
FILE: script.js
```js
// Rows 5 to 33 hold no data yet.
const body = document.getElementById('rows');
for (let n = 5; n <= 33; n++) {
  const tr = body.insertRow();
  const th = document.createElement('th');
  th.textContent = n;
  tr.append(th);
  for (let c = 0; c < 22; c++) tr.insertCell();
}

// Every table header cell gets a filter button.
document.querySelectorAll('.head td > div').forEach((div) => {
  const b = document.createElement('button');
  b.className = 'filter';
  b.setAttribute('aria-label', 'Filter ' + div.textContent);
  b.innerHTML = '<svg width="8" height="5" viewBox="0 0 8 5"><path d="M0 0h8L4 5z" fill="#555"/></svg>';
  div.parentNode.append(b);
});
```
